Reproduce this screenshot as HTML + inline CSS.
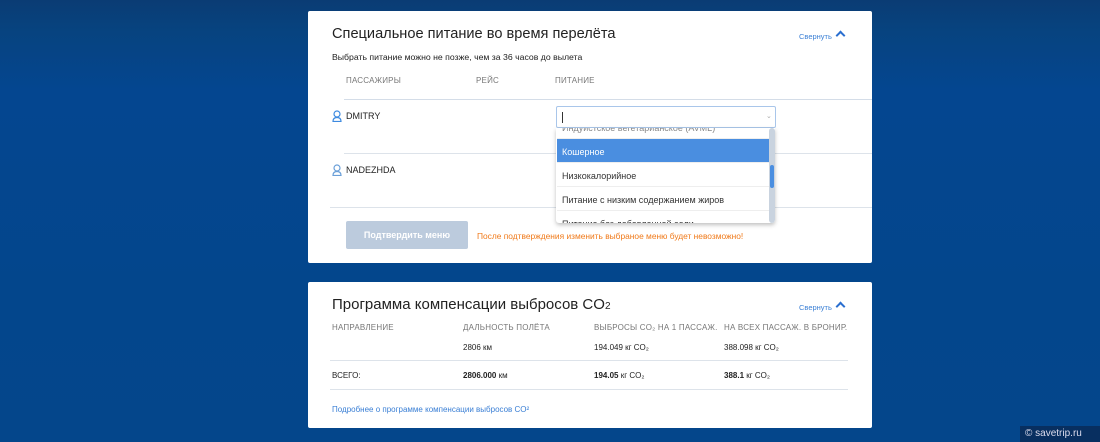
<!DOCTYPE html>
<html><head><meta charset="utf-8"><style>
*{margin:0;padding:0;box-sizing:border-box}
body{width:1100px;height:442px;overflow:hidden;position:relative;font-family:"Liberation Sans",sans-serif;background:linear-gradient(180deg,#0a3c74 0px,#07437f 30px,#044690 90px,#03468c 300px,#04468b 442px)}
.a{position:absolute;white-space:nowrap}
.card{position:absolute;left:308px;width:564px;background:#fff;border-radius:2px}
.h{font-size:15px;color:#222}
.s{font-size:9px;color:#222}
.g{font-size:8px;color:#777;letter-spacing:.2px}
.line{position:absolute;height:1px;background:#dde3ea}
.link{color:#3a7fd5;font-size:7.5px}
.chev{position:absolute;width:7px;height:7px;border-left:2px solid #2a6fd0;border-top:2px solid #2a6fd0;transform:rotate(45deg)}
.opt{position:absolute;left:1px;width:212px;height:24px;font-size:9px;color:#333;padding:8px 0 0 5px;border-bottom:1px solid #eee}
</style></head><body>
<div class="card" style="top:11px;height:252px">
 <div class="a h" style="left:24px;top:15px;font-size:14.6px">Специальное питание во время перелёта</div>
 <div class="a link" style="left:491px;top:21px">Свернуть</div>
 <div class="chev" style="left:529px;top:21px"></div>
 <div class="a s" style="left:24px;top:41px;font-size:8.7px">Выбрать питание можно не позже, чем за 36 часов до вылета</div>
 <div class="a g" style="left:38px;top:65px">ПАССАЖИРЫ</div>
 <div class="a g" style="left:168px;top:65px">РЕЙС</div>
 <div class="a g" style="left:247px;top:65px">ПИТАНИЕ</div>
 <div class="line" style="left:36px;top:88px;width:528px;background:#d4dde8"></div>
 <svg class="a" style="left:24px;top:99px" width="10" height="12" viewBox="0 0 10 12"><circle cx="5" cy="4" r="3" fill="none" stroke="#3d8ae0" stroke-width="1.2"/><path d="M1 11.5c0-3 2-4 4-4s4 1 4 4z" fill="none" stroke="#3d8ae0" stroke-width="1.2"/></svg>
 <div class="a" style="left:38px;top:100px;font-size:9px;color:#222">DMITRY</div>
 <div class="line" style="left:36px;top:142px;width:528px"></div>
 <svg class="a" style="left:24px;top:153px" width="10" height="12" viewBox="0 0 10 12"><circle cx="5" cy="4" r="3" fill="none" stroke="#6a9fd8" stroke-width="1.2"/><path d="M1 11.5c0-3 2-4 4-4s4 1 4 4z" fill="none" stroke="#6a9fd8" stroke-width="1.2"/></svg>
 <div class="a" style="left:38px;top:154px;font-size:9px;color:#222">NADEZHDA</div>
 <div class="line" style="left:22px;top:196px;width:542px"></div>
 <div class="a" style="left:38px;top:210px;width:122px;height:28px;background:#bccbdd;border-radius:2px;color:#fff;font-size:9px;font-weight:bold;text-align:center;line-height:28px">Подтвердить меню</div>
 <div class="a" style="left:169px;top:220px;font-size:8.4px;color:#f07a1a">После подтверждения изменить выбраное меню будет невозможно!</div>
 <div class="a" style="left:248px;top:95px;width:220px;height:22px;border:1px solid #a9c6ea;border-radius:2px;background:#fff">
  <div class="a" style="left:5px;top:5px;width:1px;height:11px;background:#333"></div>
  <div class="a" style="left:209px;top:5px;font-size:7px;color:#aaa">⌄</div>
 </div>
 <div class="a" style="left:248px;top:117px;width:219px;height:95px;background:#fff;box-shadow:0 2px 4px rgba(0,0,0,.25);overflow:hidden;border-radius:0 0 3px 3px">
  <div class="opt" style="top:-13px;color:#888">Индуистское вегетарианское (AVML)</div>
  <div class="opt" style="top:11px;background:#4a8ee0;color:#fff">Кошерное</div>
  <div class="opt" style="top:35px">Низкокалорийное</div>
  <div class="opt" style="top:59px">Питание с низким содержанием жиров</div>
  <div class="opt" style="top:83px">Питание без добавленной соли</div>
  <div class="a" style="left:213px;top:0;width:6px;height:95px;background:#c9d3df;border-radius:3px"></div>
  <div class="a" style="left:214px;top:37px;width:4px;height:23px;background:#4a8ee0;border-radius:2px"></div>
 </div>
</div>
<div class="card" style="top:282px;height:146px">
 <div class="a h" style="left:24px;top:14px">Программа компенсации выбросов CO<span style="font-size:10px">2</span></div>
 <div class="a link" style="left:491px;top:21px">Свернуть</div>
 <div class="chev" style="left:529px;top:21px"></div>
 <div class="a g" style="left:24px;top:41px">НАПРАВЛЕНИЕ</div>
 <div class="a g" style="left:155px;top:41px">ДАЛЬНОСТЬ ПОЛЁТА</div>
 <div class="a g" style="left:286px;top:41px">ВЫБРОСЫ CO₂ НА 1 ПАССАЖ.</div>
 <div class="a g" style="left:416px;top:41px">НА ВСЕХ ПАССАЖ. В БРОНИР.</div>
 <div class="a s" style="left:155px;top:61px;font-size:8px">2806 км</div>
 <div class="a s" style="left:286px;top:61px;font-size:8px">194.049 кг CO₂</div>
 <div class="a s" style="left:416px;top:61px;font-size:8px">388.098 кг CO₂</div>
 <div class="line" style="left:22px;top:78px;width:518px"></div>
 <div class="a s" style="left:24px;top:89px;font-size:8px">ВСЕГО:</div>
 <div class="a s" style="left:155px;top:89px;font-size:8px"><b>2806.000</b> км</div>
 <div class="a s" style="left:286px;top:89px;font-size:8px"><b>194.05</b> кг CO₂</div>
 <div class="a s" style="left:416px;top:89px;font-size:8px"><b>388.1</b> кг CO₂</div>
 <div class="line" style="left:22px;top:107px;width:518px"></div>
 <div class="a link" style="left:24px;top:123px;font-size:8px">Подробнее о программе компенсации выбросов CO²</div>
</div>
<div class="a" style="left:1020px;top:426px;width:80px;height:16px;background:#082f60;color:#dde;font-size:10px;padding:2px 0 0 5px">© savetrip.ru</div>
</body></html>
